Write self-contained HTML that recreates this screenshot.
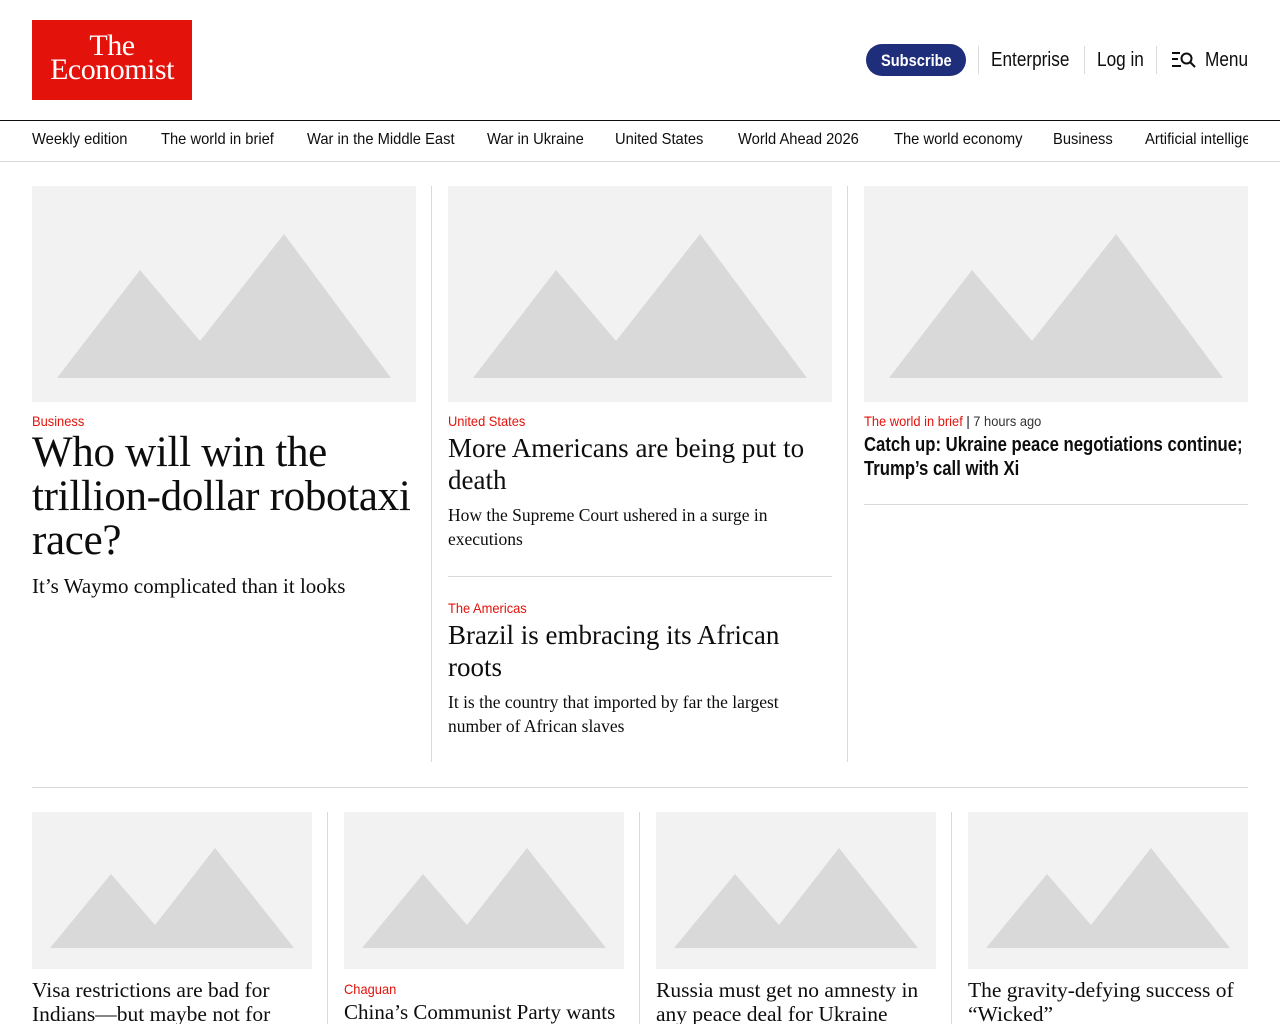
<!DOCTYPE html>
<html><head><meta charset="utf-8"><style>
*{margin:0;padding:0;box-sizing:border-box}
html,body{width:1280px;height:1024px;overflow:hidden}
body{background:#fff;position:relative;font-family:"Liberation Sans",sans-serif;color:#0d0d0d}
.a{position:absolute;white-space:nowrap}
.serif{font-family:"Liberation Serif",serif}
.red{color:#e3120b}
.img{position:absolute;background:#f2f2f2}
.img svg{position:absolute;left:0;top:0}
.vl{position:absolute;width:1px;background:#d9d9d9}
.hl{position:absolute;height:1px;background:#d9d9d9}
.c{transform:scaleX(0.86);transform-origin:0 0}
.l{transform:scaleX(0.92);transform-origin:0 0}
.nav span{position:absolute;top:131px;font-size:16px;white-space:nowrap;transform:scaleX(0.92);transform-origin:0 0}
.lbl{font-size:13px}
.wrap{position:absolute;white-space:normal}
</style></head><body>
<div class="a" style="left:32px;top:20px;width:160px;height:80px;background:#e3120b"></div>
<div class="a serif" style="left:32px;top:34px;width:160px;text-align:center;color:#fff;font-size:30px;line-height:24px;letter-spacing:-0.5px">The<br>Economist</div>

<div class="a" style="left:866px;top:44px;width:100px;height:32px;border-radius:16px;background:#1f2e7a;"></div>
<div class="a c" style="left:881px;top:51px;color:#fff;font-weight:bold;font-size:17px">Subscribe</div>
<div class="vl" style="left:978px;top:46px;height:28px"></div>
<div class="a c" style="left:991px;top:49px;font-size:20px">Enterprise</div>
<div class="vl" style="left:1084px;top:46px;height:28px"></div>
<div class="a c" style="left:1097px;top:49px;font-size:20px">Log in</div>
<div class="vl" style="left:1156px;top:46px;height:28px"></div>
<svg class="a" style="left:1170px;top:50px" width="28" height="20" viewBox="0 0 28 20"><path d="M2 3h8M2 9h6M2 16h9" stroke="#0d0d0d" stroke-width="2"/><circle cx="16.5" cy="8.5" r="5" fill="none" stroke="#0d0d0d" stroke-width="2"/><path d="M20 12l5 5" stroke="#0d0d0d" stroke-width="2"/></svg>
<div class="a c" style="left:1205px;top:49px;font-size:20px">Menu</div>

<div class="a" style="left:0;top:120px;width:1280px;height:1px;background:#0d0d0d"></div>
<div class="nav">
<span style="left:32px">Weekly edition</span>
<span style="left:161px">The world in brief</span>
<span style="left:307px">War in the Middle East</span>
<span style="left:487px">War in Ukraine</span>
<span style="left:615px">United States</span>
<span style="left:738px">World Ahead 2026</span>
<span style="left:894px">The world economy</span>
<span style="left:1053px">Business</span>
</div>
<div class="a" style="left:1145px;top:131px;width:103px;overflow:hidden;height:22px"><span class="a l" style="left:0;top:0;font-size:16px">Artificial intelligence</span></div>
<div class="a" style="left:0;top:161px;width:1280px;height:1px;background:#d9d9d9"></div>

<div class="img" style="left:32px;top:186px;width:384px;height:216px"><svg width="384" height="216"><path d="M25 192L108 84L168 155L252 48L359 192Z" fill="#d9d9d9"/></svg></div>
<div class="img" style="left:448px;top:186px;width:384px;height:216px"><svg width="384" height="216"><path d="M25 192L108 84L168 155L252 48L359 192Z" fill="#d9d9d9"/></svg></div>
<div class="img" style="left:864px;top:186px;width:384px;height:216px"><svg width="384" height="216"><path d="M25 192L108 84L168 155L252 48L359 192Z" fill="#d9d9d9"/></svg></div>
<div class="vl" style="left:431px;top:186px;height:576px"></div>
<div class="vl" style="left:847px;top:186px;height:576px"></div>

<div class="a red lbl l" style="left:32px;top:413px;font-size:14px">Business</div>
<div class="wrap serif" style="left:32px;top:431px;width:400px;font-size:43px;line-height:44px;letter-spacing:-0.3px">Who will win the trillion-dollar robotaxi race?</div>
<div class="a serif" style="left:32px;top:574px;font-size:21px">It’s Waymo complicated than it looks</div>

<div class="a red lbl l" style="left:448px;top:413px;font-size:14px">United States</div>
<div class="wrap serif" style="left:448px;top:432px;width:384px;font-size:27px;line-height:32px">More Americans are being put to death</div>
<div class="wrap serif" style="left:448px;top:503px;width:345px;font-size:17.5px;line-height:24px">How the Supreme Court ushered in a surge in executions</div>
<div class="hl" style="left:448px;top:576px;width:384px"></div>
<div class="a red lbl l" style="left:448px;top:600px;font-size:14px">The Americas</div>
<div class="wrap serif" style="left:448px;top:619px;width:384px;font-size:27px;line-height:32px">Brazil is embracing its African roots</div>
<div class="wrap serif" style="left:448px;top:690px;width:360px;font-size:17.5px;line-height:24px">It is the country that imported by far the largest number of African slaves</div>

<div class="a lbl l" style="left:864px;top:413px;font-size:14px"><span class="red">The world in brief</span> | <span style="color:#333">7 hours ago</span></div>
<div class="a c" style="left:864px;top:433px;font-size:20px;line-height:24px;font-weight:bold;transform:scaleX(0.835)">Catch up: Ukraine peace negotiations continue;<br>Trump’s call with Xi</div>
<div class="hl" style="left:864px;top:504px;width:384px"></div>

<div class="hl" style="left:32px;top:787px;width:1216px"></div>

<div class="img" style="left:32px;top:812px;width:280px;height:157px"><svg width="280" height="157"><path d="M18 136L79 62L123 113L183 36L262 136Z" fill="#d9d9d9"/></svg></div>
<div class="img" style="left:344px;top:812px;width:280px;height:157px"><svg width="280" height="157"><path d="M18 136L79 62L123 113L183 36L262 136Z" fill="#d9d9d9"/></svg></div>
<div class="img" style="left:656px;top:812px;width:280px;height:157px"><svg width="280" height="157"><path d="M18 136L79 62L123 113L183 36L262 136Z" fill="#d9d9d9"/></svg></div>
<div class="img" style="left:968px;top:812px;width:280px;height:157px"><svg width="280" height="157"><path d="M18 136L79 62L123 113L183 36L262 136Z" fill="#d9d9d9"/></svg></div>
<div class="vl" style="left:327px;top:812px;height:212px"></div>
<div class="vl" style="left:639px;top:812px;height:212px"></div>
<div class="vl" style="left:951px;top:812px;height:212px"></div>

<div class="wrap serif" style="left:32px;top:978px;width:285px;font-size:21.5px;line-height:24px">Visa restrictions are bad for Indians—but maybe not for India</div>
<div class="a red lbl l" style="left:344px;top:981px;font-size:14px">Chaguan</div>
<div class="a serif" style="left:344px;top:1000px;font-size:21px;line-height:24px">China’s Communist Party wants</div>
<div class="wrap serif" style="left:656px;top:978px;width:285px;font-size:21.5px;line-height:24px">Russia must get no amnesty in any peace deal for Ukraine</div>
<div class="wrap serif" style="left:968px;top:978px;width:285px;font-size:21.5px;line-height:24px">The gravity-defying success of “Wicked”</div>
</body></html>
